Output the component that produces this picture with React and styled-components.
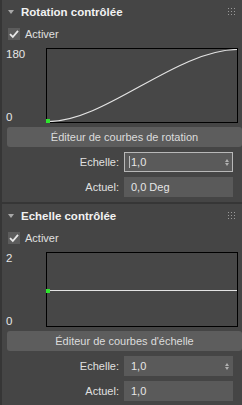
import React from "react";
import styled, { createGlobalStyle } from "styled-components";

const GlobalStyle = createGlobalStyle`
  html, body {
    margin: 0;
    padding: 0;
    background: #363636;
  }
  body {
    font-family: "Liberation Sans", Arial, sans-serif;
    font-size: 11px;
    color: #dcdcdc;
  }
`;

const Stack = styled.div`
  display: flex;
  flex-direction: column;
  gap: 2px;
  padding-left: 2px;
  width: 240px;
  height: 405px;
  overflow: hidden;
`;

const Panel = styled.section`
  background: #454545;
  display: flex;
  flex-direction: column;
  height: ${(p) => p.$height}px;
  flex-shrink: 0;
`;

const Header = styled.div`
  height: 23px;
  display: flex;
  align-items: center;
  padding-left: 6px;
  padding-right: 7px;
  gap: 7px;
`;

const Arrow = styled.span`
  width: 0;
  height: 0;
  border-left: 3px solid transparent;
  border-right: 3px solid transparent;
  border-top: 4px solid #a8a8a8;
`;

const Title = styled.div`
  flex: 1;
  font-weight: bold;
  font-size: 11.5px;
  color: #f2f2f2;
`;

const Grip = styled.div`
  display: grid;
  grid-template-columns: repeat(3, 1px);
  gap: 2px;
  span {
    width: 1px;
    height: 1px;
    background: #9a9a9a;
  }
`;

const CheckRow = styled.label`
  display: flex;
  align-items: center;
  gap: 5px;
  height: 22px;
  padding-left: 6px;
  color: #e0e0e0;
`;

const Box = styled.span`
  width: 12px;
  height: 12px;
  background: #5c5c5c;
  display: flex;
  align-items: center;
  justify-content: center;
`;

const GraphRow = styled.div`
  display: flex;
  margin-top: 3px;
  height: 75px;
`;

const Scale = styled.div`
  width: 40px;
  padding-left: 4px;
  display: flex;
  flex-direction: column;
  justify-content: space-between;
  font-size: 11.5px;
  color: #e6e6e6;
  line-height: 12px;
`;

const Graph = styled.div`
  width: 190px;
  height: 73px;
  border: 1px solid #000;
  background: #474747;
  position: relative;
`;

const Point = styled.span`
  position: absolute;
  left: -1px;
  top: ${(p) => p.$top}px;
  width: 4px;
  height: 4px;
  background: #2ee62e;
`;

const WideButton = styled.button`
  margin: 4px 0 0 5px;
  height: 20px;
  width: 235px;
  border: none;
  border-radius: 3px;
  background: #5d5d5d;
  color: #dcdcdc;
  font-family: inherit;
  font-size: 11px;
  padding: 0;
`;

const Field = styled.div`
  display: flex;
  align-items: center;
  margin-top: 5px;
  height: 20px;
`;

const FieldLabel = styled.span`
  width: 117px;
  text-align: right;
  padding-right: 5px;
  color: #e0e0e0;
`;

const Input = styled.div`
  width: 109px;
  height: 20px;
  box-sizing: border-box;
  background: #5a5a5a;
  border: 1px solid ${(p) => (p.$focused ? "#b8b8b8" : "#5a5a5a")};
  display: flex;
  align-items: center;
  padding: 0 3px 0 6px;
  color: #e6e6e6;
`;

const Caret = styled.span`
  width: 1px;
  height: 12px;
  background: #bcbcbc;
  margin-left: -2px;
  margin-right: 1px;
`;

const Value = styled.span`
  flex: 1;
`;

const Spin = styled.span`
  display: flex;
  flex-direction: column;
  gap: 1px;
  span {
    width: 0;
    height: 0;
    border-left: 2px solid transparent;
    border-right: 2px solid transparent;
  }
  span:first-child {
    border-bottom: 3px solid #b0b0b0;
  }
  span:last-child {
    border-top: 3px solid #b0b0b0;
  }
`;

const Check = () => (
  <svg width="10" height="10" viewBox="0 0 10 10">
    <path d="M1 5.2 L3.8 8 L9 1.8" fill="none" stroke="#e8e8e8" strokeWidth="1.8" />
  </svg>
);

const SCurve = () => (
  <svg width="190" height="73" viewBox="0 0 190 73" style={{ display: "block" }}>
    <path
      d="M1 72.5 C 58 73, 128 1.5, 190 0.5"
      fill="none"
      stroke="#e4e4e4"
      strokeWidth="1.2"
    />
  </svg>
);

const FlatLine = () => (
  <svg width="190" height="73" viewBox="0 0 190 73" style={{ display: "block" }}>
    <path d="M1 37.5 L190 37.5" stroke="#e4e4e4" strokeWidth="1.2" />
  </svg>
);

const Section = ({ title, height, top, bottom, curve, point, button, echelle, actuel, focused }) => (
  <Panel $height={height}>
    <Header>
      <Arrow />
      <Title>{title}</Title>
      <Grip>
        {Array.from({ length: 9 }).map((_, i) => (
          <span key={i} />
        ))}
      </Grip>
    </Header>
    <CheckRow>
      <Box>
        <Check />
      </Box>
      Activer
    </CheckRow>
    <GraphRow>
      <Scale>
        <span>{top}</span>
        <span>{bottom}</span>
      </Scale>
      <Graph>
        {curve}
        <Point $top={point} />
      </Graph>
    </GraphRow>
    <WideButton>{button}</WideButton>
    <Field>
      <FieldLabel>Echelle:</FieldLabel>
      <Input $focused={focused}>
        {focused && <Caret />}
        <Value>{echelle}</Value>
        <Spin>
          <span />
          <span />
        </Spin>
      </Input>
    </Field>
    <Field>
      <FieldLabel>Actuel:</FieldLabel>
      <Input>
        <Value>{actuel}</Value>
      </Input>
    </Field>
  </Panel>
);

export default function App() {
  return (
    <>
      <GlobalStyle />
      <Stack>
        <Section
          title="Rotation contrôlée"
          height={202}
          top="180"
          bottom="0"
          curve={<SCurve />}
          point={70}
          button="Éditeur de courbes de rotation"
          echelle="1,0"
          actuel="0,0 Deg"
          focused
        />
        <Section
          title="Echelle contrôlée"
          height={210}
          top="2"
          bottom="0"
          curve={<FlatLine />}
          point={36}
          button="Éditeur de courbes d'échelle"
          echelle="1,0"
          actuel="1,0"
        />
      </Stack>
    </>
  );
}
